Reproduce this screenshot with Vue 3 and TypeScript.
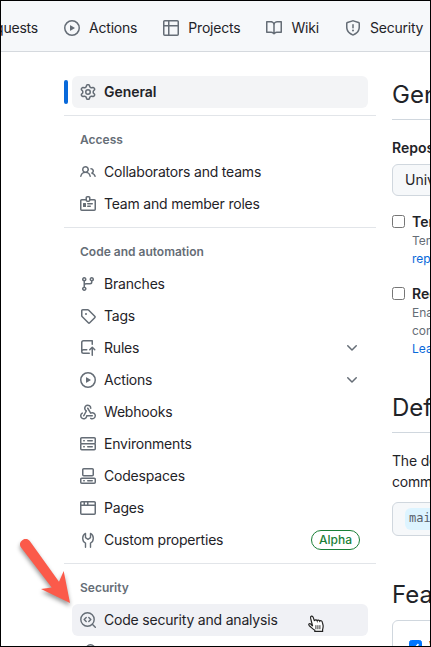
<script setup lang="ts">
interface NavItem {
  label: string
  icon: string
  chevron?: boolean
  badge?: string
  state?: 'current' | 'hover'
}
interface NavGroup {
  title?: string
  items: NavItem[]
}

const icons: Record<string, string> = {
  play: 'M8 0a8 8 0 1 1 0 16A8 8 0 0 1 8 0ZM1.5 8a6.5 6.5 0 1 0 13 0 6.5 6.5 0 0 0-13 0Zm4.879-2.773 4.264 2.559a.25.25 0 0 1 0 .428l-4.264 2.559A.25.25 0 0 1 6 10.559V5.442a.25.25 0 0 1 .379-.215Z',
  table: 'M0 1.75C0 .784.784 0 1.75 0h12.5C15.216 0 16 .784 16 1.75v12.5A1.75 1.75 0 0 1 14.25 16H1.75A1.75 1.75 0 0 1 0 14.25ZM6.5 6.5v8h7.75a.25.25 0 0 0 .25-.25V6.5Zm8-1.5V1.75a.25.25 0 0 0-.25-.25H6.5V5Zm-13 1.5v7.75c0 .138.112.25.25.25H5v-8ZM5 5V1.5H1.75a.25.25 0 0 0-.25.25V5Z',
  book: 'M0 1.75A.75.75 0 0 1 .75 1h4.253c1.227 0 2.317.59 3 1.501A3.743 3.743 0 0 1 11.006 1h4.245a.75.75 0 0 1 .75.75v10.5a.75.75 0 0 1-.75.75h-4.507a2.25 2.25 0 0 0-1.591.659l-.622.621a.75.75 0 0 1-1.06 0l-.622-.621A2.25 2.25 0 0 0 5.258 13H.75a.75.75 0 0 1-.75-.75Zm7.251 10.324.004-5.073-.002-2.253A2.25 2.25 0 0 0 5.003 2.5H1.5v9h3.757a3.75 3.75 0 0 1 1.994.574ZM8.755 4.75l-.004 7.322a3.752 3.752 0 0 1 1.992-.572H14.5v-9h-3.495a2.25 2.25 0 0 0-2.25 2.25Z',
  shield: 'M7.467.133a1.748 1.748 0 0 1 1.066 0l5.25 1.68A1.75 1.75 0 0 1 15 3.48V7c0 1.566-.32 3.182-1.303 4.682-.983 1.498-2.585 2.813-5.032 3.855a1.697 1.697 0 0 1-1.33 0c-2.447-1.042-4.049-2.357-5.032-3.855C1.32 10.182 1 8.566 1 7V3.48a1.75 1.75 0 0 1 1.217-1.667Zm.61 1.429a.25.25 0 0 0-.153 0l-5.25 1.68a.25.25 0 0 0-.174.238V7c0 1.358.275 2.666 1.057 3.86.784 1.194 2.121 2.34 4.366 3.297a.196.196 0 0 0 .154 0c2.245-.956 3.582-2.104 4.366-3.298C13.225 9.666 13.5 8.36 13.5 7V3.48a.251.251 0 0 0-.174-.237l-5.25-1.68ZM8.75 4.75v3a.75.75 0 0 1-1.5 0v-3a.75.75 0 0 1 1.5 0ZM9 10.5a1 1 0 1 1-2 0 1 1 0 0 1 2 0Z',
  gear: 'M8 0a8.2 8.2 0 0 1 .701.031C9.444.095 9.99.645 10.16 1.29l.288 1.107c.018.066.079.158.212.224.231.114.454.243.668.386.123.082.233.09.299.071l1.103-.303c.644-.176 1.392.021 1.82.63.27.385.506.792.704 1.218.315.675.111 1.422-.364 1.891l-.814.806c-.049.048-.098.147-.088.294.016.257.016.515 0 .772-.01.147.038.246.088.294l.814.806c.475.469.679 1.216.364 1.891a7.977 7.977 0 0 1-.704 1.217c-.428.61-1.176.807-1.82.63l-1.102-.302c-.067-.019-.177-.011-.3.071a5.909 5.909 0 0 1-.668.386c-.133.066-.194.158-.211.224l-.29 1.106c-.168.646-.715 1.196-1.458 1.26a8.006 8.006 0 0 1-1.402 0c-.743-.064-1.289-.614-1.458-1.26l-.289-1.106c-.018-.066-.079-.158-.212-.224a5.738 5.738 0 0 1-.668-.386c-.123-.082-.233-.09-.299-.071l-1.103.303c-.644.176-1.392-.021-1.82-.63a8.12 8.12 0 0 1-.704-1.218c-.315-.675-.111-1.422.363-1.891l.815-.806c.05-.048.098-.147.088-.294a6.214 6.214 0 0 1 0-.772c.01-.147-.038-.246-.088-.294l-.815-.806C.635 6.045.431 5.298.746 4.623a7.92 7.92 0 0 1 .704-1.217c.428-.61 1.176-.807 1.82-.63l1.102.302c.067.019.177.011.3-.071.214-.143.437-.272.668-.386.133-.066.194-.158.211-.224l.29-1.106C6.009.645 6.556.095 7.299.03 7.53.01 7.764 0 8 0Zm-.571 1.525c-.036.003-.108.036-.137.146l-.289 1.105c-.147.561-.549.967-.998 1.189-.173.086-.34.183-.5.29-.417.278-.97.423-1.529.27l-1.103-.303c-.109-.03-.175.016-.195.045-.22.312-.412.644-.573.99-.014.031-.021.11.059.19l.815.806c.411.406.562.957.53 1.456a4.709 4.709 0 0 0 0 .582c.032.499-.119 1.05-.53 1.456l-.815.806c-.081.08-.073.159-.059.19.162.346.353.677.573.989.02.03.085.076.195.046l1.102-.303c.56-.153 1.113-.008 1.53.27.161.107.328.204.501.29.447.222.85.629.997 1.189l.289 1.105c.029.109.101.143.137.146a6.6 6.6 0 0 0 1.142 0c.036-.003.108-.036.137-.146l.289-1.105c.147-.561.549-.967.998-1.189.173-.086.34-.183.5-.29.417-.278.97-.423 1.529-.27l1.103.303c.109.029.175-.016.195-.045.22-.313.411-.644.573-.99.014-.031.021-.11-.059-.19l-.815-.806c-.411-.406-.562-.957-.53-1.456a4.709 4.709 0 0 0 0-.582c-.032-.499.119-1.05.53-1.456l.815-.806c.081-.08.073-.159.059-.19a6.464 6.464 0 0 0-.573-.989c-.02-.03-.085-.076-.195-.046l-1.102.303c-.56.153-1.113.008-1.53-.27a4.44 4.44 0 0 0-.501-.29c-.447-.222-.85-.629-.997-1.189l-.289-1.105c-.029-.11-.101-.143-.137-.146a6.6 6.6 0 0 0-1.142 0ZM11 8a3 3 0 1 1-6 0 3 3 0 0 1 6 0ZM9.5 8a1.5 1.5 0 1 0-3.001.001A1.5 1.5 0 0 0 9.5 8Z',
  people: 'M2 5.5a3.5 3.5 0 1 1 5.898 2.549 5.508 5.508 0 0 1 3.034 4.084.75.75 0 1 1-1.482.235 4 4 0 0 0-7.9 0 .75.75 0 0 1-1.482-.236A5.507 5.507 0 0 1 3.102 8.05 3.493 3.493 0 0 1 2 5.5ZM11 4a3.001 3.001 0 0 1 2.22 5.018 5.01 5.01 0 0 1 2.56 3.012.749.749 0 0 1-.885.954.752.752 0 0 1-.549-.514 3.507 3.507 0 0 0-2.522-2.372.75.75 0 0 1-.574-.73v-.352a.75.75 0 0 1 .416-.672A1.5 1.5 0 0 0 11 5.5.75.75 0 0 1 11 4Zm-5.5-.5a2 2 0 1 0-.001 3.999A2 2 0 0 0 5.5 3.5Z',
  badge: 'M3 7.5a.5.5 0 0 1 .5-.5h2a.5.5 0 0 1 .5.5v3a.5.5 0 0 1-.5.5h-2a.5.5 0 0 1-.5-.5Zm10 .25a.75.75 0 0 1-.75.75h-4.5a.75.75 0 0 1 0-1.5h4.5a.75.75 0 0 1 .75.75ZM10.25 11a.75.75 0 0 0 0-1.5h-2.5a.75.75 0 0 0 0 1.5ZM7.25 0h1.5c.966 0 1.75.784 1.75 1.75V3h3.75c.966 0 1.75.784 1.75 1.75v8.5A1.75 1.75 0 0 1 14.25 15H1.75A1.75 1.75 0 0 1 0 13.25v-8.5C0 3.784.784 3 1.75 3H5.5V1.75C5.5.784 6.284 0 7.25 0Zm3.232 4.5A1.75 1.75 0 0 1 8.75 6h-1.5a1.75 1.75 0 0 1-1.732-1.5H1.75a.25.25 0 0 0-.25.25v8.5c0 .138.112.25.25.25h12.5a.25.25 0 0 0 .25-.25v-8.5a.25.25 0 0 0-.25-.25ZM7 1.75v2.5c0 .138.112.25.25.25h1.5A.25.25 0 0 0 9 4.25v-2.5a.25.25 0 0 0-.25-.25h-1.5a.25.25 0 0 0-.25.25Z',
  branch: 'M9.5 3.25a2.25 2.25 0 1 1 3 2.122V6A2.5 2.5 0 0 1 10 8.5H6a1 1 0 0 0-1 1v1.128a2.251 2.251 0 1 1-1.5 0V5.372a2.25 2.25 0 1 1 1.5 0v1.836A2.493 2.493 0 0 1 6 7h4a1 1 0 0 0 1-1v-.628A2.25 2.25 0 0 1 9.5 3.25Zm-6 0a.75.75 0 1 0 1.5 0 .75.75 0 0 0-1.5 0Zm8.25-.75a.75.75 0 1 0 0 1.5.75.75 0 0 0 0-1.5ZM4.25 12a.75.75 0 1 0 0 1.5.75.75 0 0 0 0-1.5Z',
  tag: 'M1 7.775V2.75C1 1.784 1.784 1 2.75 1h5.025c.464 0 .91.184 1.238.513l6.25 6.25a1.75 1.75 0 0 1 0 2.474l-5.026 5.026a1.75 1.75 0 0 1-2.474 0l-6.25-6.25A1.752 1.752 0 0 1 1 7.775Zm1.5 0c0 .066.026.13.073.177l6.25 6.25a.25.25 0 0 0 .354 0l5.025-5.025a.25.25 0 0 0 0-.354l-6.25-6.25a.25.25 0 0 0-.177-.073H2.75a.25.25 0 0 0-.25.25ZM6 5a1 1 0 1 1 0 2 1 1 0 0 1 0-2Z',
  rules: 'M1 2.5A2.5 2.5 0 0 1 3.5 0h8.75a.75.75 0 0 1 .75.75v3.5a.75.75 0 0 1-1.5 0V1.5h-8a1 1 0 0 0-1 1v6.708A2.493 2.493 0 0 1 3.5 9h3.25a.75.75 0 0 1 0 1.5H3.5a1 1 0 0 0 0 2h5.75a.75.75 0 0 1 0 1.5H3.5A2.5 2.5 0 0 1 1 11.5Zm13.23 7.79-1.224-1.224v6.184a.75.75 0 0 1-1.5 0V9.066L10.28 10.29a.75.75 0 0 1-1.06-1.061l2.505-2.504a.75.75 0 0 1 1.06 0L15.29 9.23a.751.751 0 0 1-.018 1.042.751.751 0 0 1-1.042.018Z',
  webhook: 'M5.5 4.25a2.25 2.25 0 0 1 4.5 0 .75.75 0 0 0 1.5 0 3.75 3.75 0 1 0-6.14 2.889l-2.272 4.258a.75.75 0 0 0 1.324.706L7 7.25a.75.75 0 0 0-.309-1.015A2.25 2.25 0 0 1 5.5 4.25ZM7.364 3.607a.75.75 0 0 1 1.03.257l2.608 4.349a3.75 3.75 0 1 1-.628 6.785.75.75 0 0 1 .752-1.299 2.25 2.25 0 1 0-.033-3.88.75.75 0 0 1-1.03-.256L7.107 4.636a.75.75 0 0 1 .257-1.03ZM2.9 8.776A.75.75 0 0 1 2.625 9.8 2.25 2.25 0 1 0 6 11.75a.75.75 0 0 1 .75-.751h5.5a.75.75 0 0 1 0 1.5H7.425a3.751 3.751 0 1 1-5.55-3.998.75.75 0 0 1 1.024.274Z',
  server: 'M1.75 1h12.5c.966 0 1.75.784 1.75 1.75v4c0 .372-.116.717-.314 1 .198.283.314.628.314 1v4a1.75 1.75 0 0 1-1.75 1.75H1.75A1.75 1.75 0 0 1 0 12.75v-4c0-.358.109-.707.314-1a1.739 1.739 0 0 1-.314-1v-4C0 1.784.784 1 1.75 1ZM1.5 2.75v4c0 .138.112.25.25.25h12.5a.25.25 0 0 0 .25-.25v-4a.25.25 0 0 0-.25-.25H1.75a.25.25 0 0 0-.25.25Zm.25 5.75a.25.25 0 0 0-.25.25v4c0 .138.112.25.25.25h12.5a.25.25 0 0 0 .25-.25v-4a.25.25 0 0 0-.25-.25ZM7 4.75A.75.75 0 0 1 7.75 4h4.5a.75.75 0 0 1 0 1.5h-4.5A.75.75 0 0 1 7 4.75ZM7.75 10h4.5a.75.75 0 0 1 0 1.5h-4.5a.75.75 0 0 1 0-1.5ZM3 4.75A.75.75 0 0 1 3.75 4h.5a.75.75 0 0 1 0 1.5h-.5A.75.75 0 0 1 3 4.75ZM3.75 10h.5a.75.75 0 0 1 0 1.5h-.5a.75.75 0 0 1 0-1.5Z',
  codespaces: 'M0 11.25c0-.966.784-1.75 1.75-1.75h12.5c.966 0 1.75.784 1.75 1.75v3A1.75 1.75 0 0 1 14.25 16H1.75A1.75 1.75 0 0 1 0 14.25Zm2-9.5C2 .784 2.784 0 3.75 0h8.5C13.216 0 14 .784 14 1.75v5a1.75 1.75 0 0 1-1.75 1.75h-8.5A1.75 1.75 0 0 1 2 6.75Zm1.75-.25a.25.25 0 0 0-.25.25v5c0 .138.112.25.25.25h8.5a.25.25 0 0 0 .25-.25v-5a.25.25 0 0 0-.25-.25Zm-2 9.5a.25.25 0 0 0-.25.25v3c0 .138.112.25.25.25h12.5a.25.25 0 0 0 .25-.25v-3a.25.25 0 0 0-.25-.25ZM7 12.75a.75.75 0 0 1 .75-.75h4.5a.75.75 0 0 1 0 1.5h-4.5a.75.75 0 0 1-.75-.75Zm-4 0a.75.75 0 0 1 .75-.75h.5a.75.75 0 0 1 0 1.5h-.5a.75.75 0 0 1-.75-.75Z',
  browser: 'M0 2.75C0 1.784.784 1 1.75 1h12.5c.966 0 1.75.784 1.75 1.75v10.5A1.75 1.75 0 0 1 14.25 15H1.75A1.75 1.75 0 0 1 0 13.25ZM14.5 6h-13v7.25c0 .138.112.25.25.25h12.5a.25.25 0 0 0 .25-.25Zm-6-3.5v2h6V2.75a.25.25 0 0 0-.25-.25ZM5 2.5v2h2v-2Zm-3.25 0a.25.25 0 0 0-.25.25V4.5h2v-2Z',
}

const tabs = [
  { label: 'Actions', icon: 'play' },
  { label: 'Projects', icon: 'table' },
  { label: 'Wiki', icon: 'book' },
  { label: 'Security', icon: 'shield' },
]

const groups: NavGroup[] = [
  { items: [{ label: 'General', icon: 'gear', state: 'current' }] },
  {
    title: 'Access',
    items: [
      { label: 'Collaborators and teams', icon: 'people' },
      { label: 'Team and member roles', icon: 'badge' },
    ],
  },
  {
    title: 'Code and automation',
    items: [
      { label: 'Branches', icon: 'branch' },
      { label: 'Tags', icon: 'tag' },
      { label: 'Rules', icon: 'rules', chevron: true },
      { label: 'Actions', icon: 'play', chevron: true },
      { label: 'Webhooks', icon: 'webhook' },
      { label: 'Environments', icon: 'server' },
      { label: 'Codespaces', icon: 'codespaces' },
      { label: 'Pages', icon: 'browser' },
      { label: 'Custom properties', icon: 'tools', badge: 'Alpha' },
    ],
  },
  {
    title: 'Security',
    items: [
      { label: 'Code security and analysis', icon: 'scan', state: 'hover' },
      { label: '', icon: 'key' },
    ],
  },
]
</script>

<template>
  <div class="frame">
    <header class="tabs">
      <span class="tab clipped">Pull requests</span>
      <a v-for="tab in tabs" :key="tab.label" class="tab">
        <svg class="icon" viewBox="0 0 16 16"><path :d="icons[tab.icon]" fill-rule="evenodd" /></svg>
        <span>{{ tab.label }}</span>
      </a>
    </header>

    <div class="body">
      <nav class="sidebar">
        <section v-for="(group, i) in groups" :key="i" class="group">
          <h3 v-if="group.title" class="group-title">{{ group.title }}</h3>
          <a v-for="item in group.items" :key="item.label" class="item" :class="item.state">
            <svg v-if="item.icon === 'tools'" class="icon line" viewBox="0 0 16 16">
              <path d="M5.5 15.2v-4.1C3.6 10.2 2.7 8.5 2.7 6.2c0-2.1 1-3.8 2.8-4.8v4.2L8 7.3l2.5-1.7V1.4c1.8 1 2.8 2.7 2.8 4.8 0 2.3-.9 4-2.8 4.9v4.1" />
            </svg>
            <svg v-else-if="item.icon === 'scan'" class="icon line" viewBox="0 0 16 16">
              <circle cx="7.5" cy="7.5" r="6.7" />
              <path d="m12.3 12.3 3 3M6.2 5.4 4.2 7.5l2 2.1M8.8 5.4l2 2.1-2 2.1" />
            </svg>
            <svg v-else-if="item.icon === 'key'" class="icon line" viewBox="0 0 16 16">
              <circle cx="10.5" cy="5.5" r="4.7" />
              <path d="m7 9-6 6" />
            </svg>
            <svg v-else class="icon" viewBox="0 0 16 16"><path :d="icons[item.icon]" :fill-rule="item.icon === 'webhook' ? 'nonzero' : 'evenodd'" /></svg>
            <span class="label">{{ item.label }}</span>
            <svg v-if="item.chevron" class="icon" viewBox="0 0 16 16">
              <path d="M12.78 5.22a.749.749 0 0 1 0 1.06l-4.25 4.25a.749.749 0 0 1-1.06 0L3.22 6.28a.749.749 0 1 1 1.06-1.06L8 8.939l3.72-3.719a.749.749 0 0 1 1.06 0Z" />
            </svg>
            <span v-if="item.badge" class="pill">{{ item.badge }}</span>
          </a>
        </section>
      </nav>

      <main class="content">
        <h2 class="title">General</h2>
        <strong class="field-label">Repository name</strong>
        <div class="input">Universe</div>
        <div class="check">
          <i class="box"></i>
          <div>
            <strong>Template repository</strong>
            <p>Template repositories let<br /><a>repositories</a></p>
          </div>
        </div>
        <div class="check">
          <i class="box"></i>
          <div>
            <strong>Require contributors</strong>
            <p>Enabling this setting<br />contributors<br /><a>Learn more</a></p>
          </div>
        </div>
        <h2 class="title default">Default branch</h2>
        <p class="copy">The default branch<br />commits</p>
        <div class="branch"><code>main</code></div>
        <h2 class="features-title">Features</h2>
        <div class="features">
          <i class="box checked">
            <svg viewBox="0 0 13 13"><path d="m3 6.7 2.3 2.4L10 3.7" /></svg>
          </i>
          <strong>Wikis</strong>
        </div>
      </main>
    </div>

    <svg class="arrow" viewBox="0 0 80 90">
      <path d="M15.9 19.3A5.5 5.5 0 0 1 24.6 12.7L54 53.8 58.7 43 65 75 36 61 46.7 59.5Z" />
    </svg>
    <svg class="pointer" viewBox="0 0 18 20">
      <path d="M5.6 11.2 3.6 3.2C3.1.9 5.5.3 6.2 2.4l1.3 3.7c0-1.5 2.1-1.8 2.7-.2.3-1.2 2.1-1.2 2.6.3.7-1 2.2-.5 2.5 1l.8 3.2c.3 1.8-.2 2.6-.5 4.3v1.7H7.8v-1.1c-2-1.3-3.4-2.8-5.4-4.5-1.5-1.4-.1-2.8 1.4-1.7Z" />
      <path class="creases" d="M8.9 10.2v4M10.9 10.2v4M12.9 10.2v4" />
    </svg>
  </div>
</template>

<style>
body {
  overflow: hidden;
}
</style>

<style scoped>
.frame {
  position: relative;
  box-sizing: border-box;
  width: 431px;
  height: 647px;
  overflow: hidden;
  border: 1px solid #000;
  background: #fff;
  color: #1f2328;
  font: 14px/21px Inter, "Liberation Sans", sans-serif;
  white-space: nowrap;
}
h2,
h3,
p {
  margin: 0;
}
strong {
  font-weight: 600;
}
.tabs {
  display: flex;
  align-items: center;
  gap: 26px;
  box-sizing: border-box;
  height: 51px;
  padding: 3px 0 0;
  border-bottom: 1px solid #d5d9de;
  background: #f6f8fa;
  letter-spacing: -0.22px;
}
.tab {
  display: flex;
  align-items: center;
  flex: none;
  gap: 9.1px;
}
.clipped {
  justify-content: flex-end;
  width: 37px;
}
.icon {
  flex: none;
  width: 16px;
  height: 16px;
  fill: #656d76;
}
.icon.line {
  fill: none;
  stroke: #656d76;
  stroke-width: 1.4;
  stroke-linecap: round;
  stroke-linejoin: round;
}
.body {
  display: flex;
  gap: 16px;
  padding-left: 63px;
}
.sidebar {
  flex: none;
  width: 312px;
  padding-top: 24px;
}
.group + .group {
  margin-top: 7px;
  padding-top: 8px;
  border-top: 1px solid #e2e5e9;
}
.group-title {
  height: 32px;
  padding-left: 16px;
  color: #656d76;
  font-size: 12px;
  font-weight: 600;
  line-height: 32px;
}
.item {
  display: flex;
  align-items: center;
  gap: 8px;
  height: 32px;
  box-sizing: border-box;
  margin: 0 8px;
  padding: 0 8px;
  border-radius: 6px;
}
.label {
  flex: 1;
  padding-bottom: 2px;
  letter-spacing: -0.2px;
}
.current {
  position: relative;
  background: #f3f4f6;
  font-weight: 600;
}
.current .label {
  letter-spacing: -0.05px;
}
.current::before {
  content: "";
  position: absolute;
  top: 4px;
  left: -8px;
  width: 4px;
  height: 24px;
  border-radius: 6px;
  background: #0969da;
}
.hover {
  background: #f0f1f5;
}
.pill {
  box-sizing: border-box;
  height: 20px;
  padding: 0 7px;
  border: 1px solid #1a7f37;
  border-radius: 10px;
  color: #1a7f37;
  font-size: 12px;
  font-weight: 500;
  line-height: 18px;
}
.content {
  flex: none;
  width: 300px;
  padding-top: 24px;
}
.title {
  height: 44px;
  box-sizing: border-box;
  padding-top: 1px;
  border-bottom: 1px solid #d0d7de;
  font-size: 24px;
  font-weight: 400;
  line-height: 36px;
}
.field-label {
  display: block;
  margin-top: 17px;
}
.input,
.branch,
.features {
  box-sizing: border-box;
  border: 1px solid #d0d7de;
  border-radius: 6px;
}
.input {
  height: 32px;
  margin-top: 6px;
  padding-left: 12px;
  background: #f6f8fa;
  line-height: 30px;
}
.check {
  display: flex;
  gap: 7px;
  margin-top: 15px;
}
.check strong {
  display: block;
  line-height: 21px;
}
.check p {
  color: #656d76;
  font-size: 12px;
  line-height: 18px;
}
.check a {
  color: #0969da;
}
.box {
  flex: none;
  box-sizing: border-box;
  width: 13px;
  height: 13px;
  margin-top: 4px;
  border: 1px solid #767676;
  border-radius: 2.5px;
}
.default {
  margin-top: 31px;
}
.copy {
  margin-top: 17px;
  letter-spacing: -0.18px;
}
.branch {
  height: 34px;
  margin-top: 10px;
  padding: 5px 12px;
  background: #f6f8fa;
}
code {
  display: block;
  width: max-content;
  padding: 0 4px;
  border-radius: 6px;
  background: #ddf4ff;
  color: #57606a;
  font: 12px/20px "DejaVu Sans Mono", "Liberation Mono", monospace;
  padding-bottom: 2px;
}
.features-title {
  margin-top: 41px;
  font-size: 24px;
  font-weight: 400;
  line-height: 36px;
}
.features {
  display: flex;
  gap: 7px;
  height: 80px;
  margin-top: 7px;
  padding: 15px 16px;
}
.checked {
  border-color: #0075ff;
  background: #0075ff;
}
.checked svg {
  display: block;
  width: 11px;
  height: 11px;
  fill: none;
  stroke: #fff;
  stroke-width: 2;
}
.arrow {
  position: absolute;
  left: 4px;
  top: 527px;
  width: 80px;
  height: 90px;
  fill: #fb5a4a;
  filter: drop-shadow(0 3px 2px rgba(0, 0, 0, 0.4));
}
.pointer {
  position: absolute;
  left: 306px;
  top: 614px;
  width: 18px;
  height: 20px;
  fill: #fff;
  stroke: #222;
  stroke-width: 1.2;
}
.creases {
  stroke-width: 0.9;
}
</style>
